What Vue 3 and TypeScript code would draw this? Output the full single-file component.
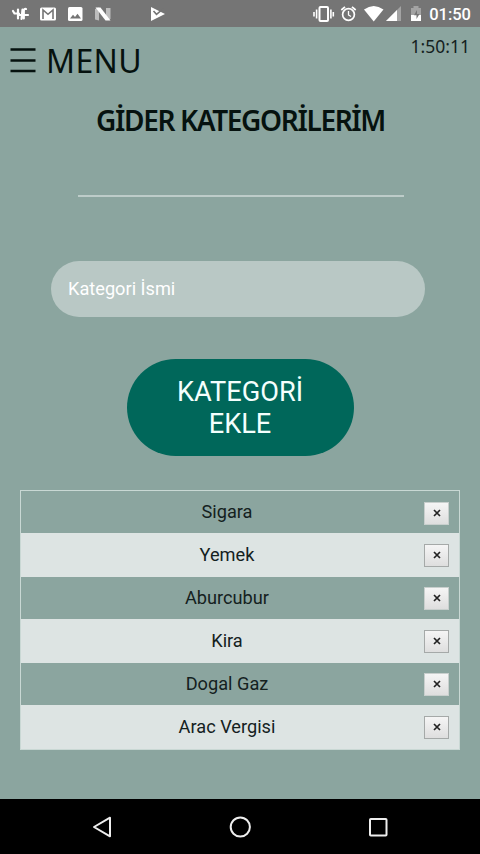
<script setup lang="ts">
import { ref } from 'vue'

const categories = ref<string[]>(['Sigara', 'Yemek', 'Aburcubur', 'Kira', 'Dogal Gaz', 'Arac Vergisi'])
const name = ref('')

function addCategory(): void {
  const value = name.value.trim()
  if (value) categories.value.push(value)
  name.value = ''
}

function removeCategory(index: number): void {
  categories.value.splice(index, 1)
}
</script>

<template>
  <div class="screen">
    <header class="status">
      <svg class="status-icons" width="170" height="27" viewBox="0 0 170 27">
        <g fill="none" stroke="#fff" stroke-width="2.2" stroke-linecap="round" stroke-linejoin="round">
          <path d="M13 11l1.500 2.500H19M18 9.500v9M22.500 9.500l-1 9.500M26 9q-2-.5-2.200 2v7.500M19.500 15h8.500" />
        </g>
        <rect x="40" y="7.500" width="16" height="13" rx="1.500" fill="#fff" />
        <path d="M43 19V10l5 4.300 5-4.300v9" fill="none" stroke="#757575" stroke-width="1.600" />
        <rect x="68" y="7" width="14.500" height="14" rx="1.500" fill="#fff" />
        <path d="M70 18.500l3-3.700 2 2.200 2.500-3.200 3.500 4.700z" fill="#757575" />
        <path d="M95 9l4-1.500v13l-4-1zM106 8l4.500 0v11l-4.500 1z" fill="#bdbdbd" />
        <path d="M95.500 7.500h5l10 13h-5z" fill="#fff" />
        <path d="M151 7l14 7-14 7z" fill="#fff" />
        <path d="M153.500 11l3 3.300 7-5.800" fill="none" stroke="#757575" stroke-width="1.600" />
      </svg>
      <div class="status-right">
        <svg width="112" height="27" viewBox="312 0 112 27">
          <g fill="none" stroke="#fff">
            <rect x="319.500" y="7" width="8.500" height="14" rx="1" stroke-width="2" />
            <path d="M316.600 9.500v9M330.900 9.500v9M314 12v4.500M333.300 12v4.500" stroke-width="1.600" />
            <circle cx="348.500" cy="14.500" r="5.900" stroke-width="1.700" />
            <path d="M348.500 11v4l2.500 1.500" stroke-width="1.300" />
            <path d="M341.300 10l3.700-3.100M355.700 10l-3.700-3.100" stroke-width="1.800" />
          </g>
          <path d="M364 9.500q9.700-7 19.500 0L373.700 21.500z" fill="#fff" />
          <path d="M401 6v15h-15z" fill="#a3a3a3" />
          <path d="M397 10v11h-11z" fill="#fff" />
          <path d="M411 8h2.500V6h5v2h2.500v13h-10z" fill="#a3a3a3" />
          <path d="M411 15h10v6h-10z" fill="#fff" />
          <path d="M417 10l-3 5.200h2.500V19l3-5h-2.500z" fill="#757575" />
        </svg>
        <span class="status-time">01:50</span>
      </div>
    </header>

    <main class="content">
      <div class="topbar">
        <button class="menu" type="button">
          <svg width="26" height="26" viewBox="0 0 26 26">
            <path d="M.5 2.500h25M.5 13.500h25M.5 24h25" stroke="#06120f" stroke-width="2.300" />
          </svg>
          <span>MENU</span>
        </button>
        <time class="clock">1:50:11</time>
      </div>

      <h1 class="title">GİDER KATEGORİLERİM</h1>
      <hr class="divider" />

      <form class="form" @submit.prevent="addCategory">
        <input v-model="name" class="field" type="text" placeholder="Kategori İsmi" />
        <button class="add" type="submit">KATEGORİ<br />EKLE</button>
      </form>

      <ul class="list">
        <li v-for="(category, index) in categories" :key="category" class="row">
          <span class="label">{{ category }}</span>
          <button class="remove" type="button" @click="removeCategory(index)">
            <svg width="8" height="8" viewBox="0 0 8 8">
              <path d="M1 1l6 6M7 1L1 7" stroke="#222" stroke-width="1.700" />
            </svg>
          </button>
        </li>
      </ul>
    </main>

    <nav class="navbar">
      <svg width="22" height="24" viewBox="0 0 22 24">
        <path d="M19 2.700v18.600L3 12z" fill="none" stroke="#eee" stroke-width="2" stroke-linejoin="round" />
      </svg>
      <svg width="24" height="24" viewBox="0 0 24 24">
        <circle cx="12.300" cy="12" r="9.600" fill="none" stroke="#eee" stroke-width="2" />
      </svg>
      <svg width="22" height="24" viewBox="0 0 22 24">
        <rect x="3" y="4" width="16.500" height="16.500" rx="0.800" fill="none" stroke="#eee" stroke-width="2" />
      </svg>
    </nav>
  </div>
</template>

<style>
body {
  margin: 0;
}
</style>

<style scoped>
.screen {
  display: flex;
  flex-direction: column;
  width: 480px;
  height: 854px;
  overflow: hidden;
  background: #8ba59f;
  font-family: Roboto, sans-serif;
  color: #14211e;
}
button {
  padding: 0;
  border: 0;
  background: none;
  font: inherit;
  color: inherit;
}
svg {
  display: block;
  flex: none;
}
.status {
  display: flex;
  justify-content: space-between;
  height: 27px;
  background: #757575;
}
.status-right {
  display: flex;
  align-items: center;
  gap: 5px;
  padding-right: 9px;
}
.status-time {
  color: #fff;
  font-size: 16.500px;
  font-weight: 500;
  line-height: 27px;
  padding-top: 2px;
}
.content {
  flex: 1;
  display: flex;
  flex-direction: column;
  align-items: center;
}
.topbar {
  align-self: stretch;
  display: flex;
  justify-content: space-between;
  align-items: flex-start;
  height: 74px;
  padding: 0 10px;
  box-sizing: border-box;
}
.menu {
  display: flex;
  align-items: center;
  gap: 10px;
  padding-top: 12px;
  font-family: "Noto Sans", sans-serif;
  font-size: 32px;
  line-height: 44px;
  letter-spacing: 0.400px;
  color: #06120f;
}
.menu svg {
  margin-top: -2px;
}
.clock {
  padding-top: 7px;
  font-family: "Noto Sans", sans-serif;
  font-size: 17.500px;
  line-height: 24px;
}
.title {
  margin: 0 0 0 1px;
  font-family: "Noto Sans", sans-serif;
  font-size: 28px;
  font-weight: 600;
  line-height: 38px;
  letter-spacing: -1.350px;
  white-space: nowrap;
  color: #06120f;
}
.divider {
  width: 326px;
  height: 2px;
  margin: 56px 0 64px;
  position: relative;
  left: 1px;
  border: 0;
  background: #bdccc9;
}
.form {
  display: flex;
  flex-direction: column;
  align-items: center;
  gap: 42px;
}
.field {
  width: 374px;
  height: 56px;
  margin-left: -4px;
  padding: 0 17px 2px;
  box-sizing: border-box;
  border: 0;
  border-radius: 28px;
  outline: 0;
  background: #b9c8c5;
  font: 18.200px Roboto, sans-serif;
  color: #fff;
}
.field::placeholder {
  color: #fff;
  opacity: 1;
}
.add {
  width: 227px;
  height: 97px;
  border-radius: 49px;
  background: #00675a;
  color: #f4fffd;
  font-size: 27.200px;
  line-height: 32px;
}
.list {
  width: 440px;
  margin: 34px 0 0;
  padding: 0;
  box-sizing: border-box;
  border: 1px solid #c9d8d4;
  list-style: none;
}
.row {
  display: flex;
  align-items: center;
  height: 42px;
  padding-right: 10px;
}
.row:nth-child(even) {
  height: 44px;
  background: #dde4e3;
}
.row:first-child .remove {
  margin-top: 2px;
}
.label {
  flex: 1;
  padding: 0 0 1px 9px;
  font-size: 18.200px;
  text-align: center;
}
.remove {
  display: grid;
  place-items: center;
  width: 25px;
  height: 23px;
  border: 1px solid #c8cfcd;
  background: linear-gradient(#f5f5f5, #dedede);
}
.row:nth-child(even) .remove {
  border-color: #a5a9a8;
}
.navbar {
  display: flex;
  justify-content: space-between;
  align-items: center;
  height: 55px;
  padding: 0 91px;
  background: #000;
}
</style>
